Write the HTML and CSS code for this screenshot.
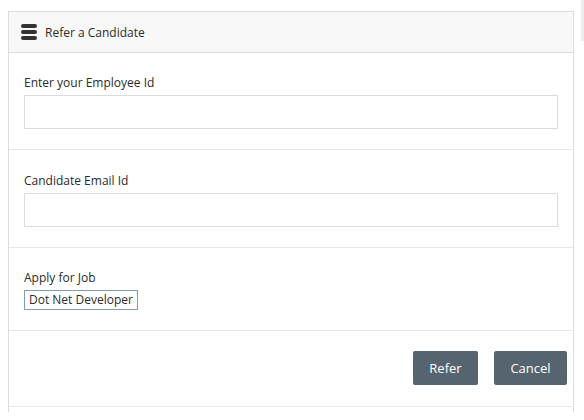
FILE: index.html
```html
<!DOCTYPE html>
<html>
<head>
<meta charset="utf-8">
<link rel="stylesheet" href="styles.css">
</head>
<body>
<div class="scroll-hint"></div>
<div class="panel">
  <div class="panel-header">
    <svg class="icon" width="16" height="16" viewBox="0 0 16 16">
      <rect x="0" y="0" width="16" height="4" rx="2" fill="#333"/>
      <rect x="0" y="6" width="16" height="4" rx="2" fill="#333"/>
      <rect x="0" y="12" width="16" height="4" rx="2" fill="#333"/>
    </svg>
    <span class="title">Refer a Candidate</span>
  </div>
  <div class="section">
    <label class="label">Enter your Employee Id</label>
    <input class="field" type="text">
  </div>
  <div class="section section-tall">
    <label class="label">Candidate Email Id</label>
    <input class="field" type="text">
  </div>
  <div class="section">
    <label class="label">Apply for Job</label>
    <div class="job">Dot Net Developer</div>
  </div>
  <div class="footer">
    <button class="btn">Refer</button>
    <button class="btn btn-cancel">Cancel</button>
  </div>
  <div class="tail"></div>
</div>
</body>
</html>
```
FILE: styles.css
```css
html, body { background: #fff; }
body {
  margin: 11px 0 0 8px;
  font-family: "Open Sans", "Noto Sans", Arial, sans-serif;
  font-size: 12px;
  color: #333;
  position: relative;
}
.scroll-hint {
  position: fixed;
  top: 0;
  right: 0;
  width: 3px;
  height: 41px;
  background: #ececec;
}
.panel {
  width: 566px;
  box-sizing: border-box;
  border: 1px solid #ddd;
  border-bottom: none;
}
.panel-header {
  height: 40px;
  background: #f8f8f8;
  border-bottom: 1px solid #ddd;
  display: flex;
  align-items: center;
  padding-left: 12px;
  gap: 8px;
}
.icon { display: block; }
.title { font-size: 12px; color: #2b2b2b; }
.section {
  padding: 21px 15px 20px;
  border-bottom: 1px solid #e8e8e8;
}
.section-tall { padding-top: 22px; }
.label {
  display: block;
  line-height: 17px;
  margin-bottom: 4px;
  color: #2b2b2b;
}
.field {
  display: block;
  width: 100%;
  box-sizing: border-box;
  height: 34px;
  border: 1px solid #dcdcdc;
  margin: 0;
  padding: 0 8px;
  font: inherit;
  outline: none;
}
.job {
  display: block;
  width: fit-content;
  margin-top: 1px;
  border: 1px solid #7f9db9;
  height: 18px;
  line-height: 18px;
  padding: 0 4px;
  font-size: 12px;
  color: #2b2b2b;
}
.footer {
  display: flex;
  justify-content: flex-end;
  gap: 16px;
  padding: 20px 6px 21px;
  border-bottom: 1px solid #e8e8e8;
}
.btn {
  height: 34px;
  width: 65px;
  border: none;
  border-radius: 2px;
  background: #55646f;
  color: #fff;
  font-family: "Open Sans", "Noto Sans", Arial, sans-serif;
  font-size: 13px;
  padding: 0;
  margin: 0;
}
.btn-cancel { width: 73px; }
.tail { height: 5px; }
```
